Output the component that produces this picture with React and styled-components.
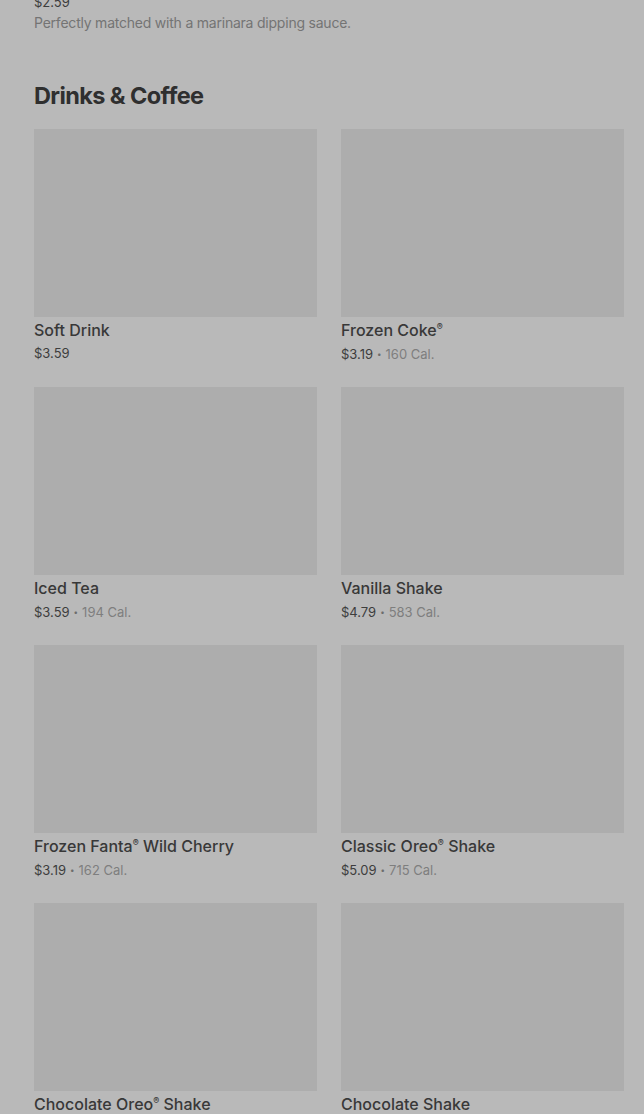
import React from "react";
import styled, { createGlobalStyle } from "styled-components";

const GlobalStyle = createGlobalStyle`
  html, body {
    margin: 0;
    padding: 0;
    background: #b9b9b9;
    font-family: Inter, "Noto Sans", Arial, sans-serif;
    color: #333;
  }
`;

const drinks = [
  { name: "Soft Drink", price: "$3.59" },
  { name: "Frozen Coke", reg: true, price: "$3.19", cal: "160 Cal." },
  { name: "Iced Tea", price: "$3.59", cal: "194 Cal." },
  { name: "Vanilla Shake", price: "$4.79", cal: "583 Cal." },
  { name: "Frozen Fanta", reg: true, rest: " Wild Cherry", price: "$3.19", cal: "162 Cal." },
  { name: "Classic Oreo", reg: true, rest: " Shake", price: "$5.09", cal: "715 Cal." },
  { name: "Chocolate Oreo", reg: true, rest: " Shake", price: "$3.19", cal: "" },
  { name: "Chocolate Shake", price: "$4.79", cal: "" },
];

const App = () => {
  return (
    <Page>
      <GlobalStyle />
      <PrevItem>
        <Price>$2.59</Price>
        <Description>Perfectly matched with a marinara dipping sauce.</Description>
      </PrevItem>
      <Section>
        <Heading>Drinks &amp; Coffee</Heading>
        <Grid>
          {drinks.map((d, i) => (
            <Card key={i}>
              <Thumb />
              <Name>
                {d.name}
                {d.reg && <Reg>®</Reg>}
                {d.rest}
              </Name>
              <Meta>
                <Price>{d.price}</Price>
                {d.cal && (
                  <>
                    <Dot>•</Dot>
                    <Cal>{d.cal}</Cal>
                  </>
                )}
              </Meta>
            </Card>
          ))}
        </Grid>
      </Section>
    </Page>
  );
};

const Page = styled.div`
  padding: 0 20px 0 34px;
  margin-top: -8px;
  height: 1122px;
  overflow: hidden;
`;

const PrevItem = styled.div`
  display: flex;
  flex-direction: column;
`;

const Price = styled.span`
  font-size: 13px;
  line-height: 20px;
  color: #3d3d3d;
`;

const Description = styled.p`
  margin: 1px 0 0;
  font-size: 14px;
  line-height: 20px;
  color: #747474;
  letter-spacing: -0.22px;
`;

const Section = styled.section`
  margin-top: 47px;
`;

const Heading = styled.h2`
  margin: 0 0 17px;
  font-size: 23.5px;
  line-height: 32px;
  font-weight: 700;
  letter-spacing: -0.6px;
  color: #2f2f2f;
`;

const Grid = styled.div`
  display: grid;
  grid-template-columns: repeat(2, 283px);
  column-gap: 24px;
  row-gap: 22px;
`;

const Card = styled.div`
  display: flex;
  flex-direction: column;
`;

const Thumb = styled.div`
  height: 188px;
  background: #adadad;
`;

const Name = styled.div`
  margin-top: 2px;
  font-size: 16px;
  line-height: 22px;
  font-weight: 500;
  color: #383838;
`;

const Reg = styled.sup`
  font-size: 9px;
  line-height: 0;
`;

const Meta = styled.div`
  display: flex;
  align-items: center;
  margin-top: 2px;
  line-height: 22px;
  font-size: 13px;
`;

const Dot = styled.span`
  margin: 0 4px;
  font-size: 8px;
  color: #6d6d6d;
`;

const Cal = styled.span`
  color: #7e7e7e;
  font-size: 13px;
`;

export default App;
